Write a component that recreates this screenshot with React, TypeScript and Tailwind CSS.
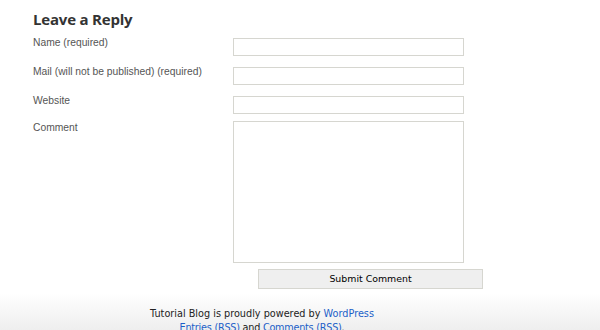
export default function App() {
  const fields = [
    "Name (required)",
    "Mail (will not be published) (required)",
    "Website",
  ];
  const labelFont = { fontFamily: '"Liberation Sans", Arial, sans-serif' };

  return (
    <div
      className="h-[330px] w-[600px] overflow-hidden bg-white"
      style={{ fontFamily: '"DejaVu Sans", "Noto Sans", sans-serif' }}
    >
      <div className="pl-[33px] pt-[9px]">
        <h3
          className="text-[15px] font-bold leading-[20px] tracking-[-0.2px] text-[#333]"
          style={{ fontFamily: '"Open Sans", "DejaVu Sans", sans-serif' }}
        >
          Leave a Reply
        </h3>
        <div className="mt-[9px] flex flex-col gap-[11px]">
          {fields.map((label) => (
            <div key={label} className="flex h-[18px]">
              <label
                className="-mt-[1px] w-[200px] text-[10.3px] leading-[12px] text-[#555]"
                style={labelFont}
              >
                {label}
              </label>
              <input
                type="text"
                className="h-[18px] w-[231px] border border-[#d6d6d0] bg-white outline-none"
              />
            </div>
          ))}
        </div>
        <div className="mt-[7px] flex">
          <label
            className="mt-[1px] w-[200px] text-[10.3px] leading-[12px] text-[#555]"
            style={labelFont}
          >
            Comment
          </label>
          <textarea className="block h-[142px] w-[231px] resize-none border border-[#d6d6d0] bg-white outline-none" />
        </div>
        <div className="mt-[6px] pl-[225px]">
          <button className="block h-[20px] w-[225px] border border-[#d6d6d0] bg-[#efefef] text-[9.4px] leading-[18px] text-black">
            Submit Comment
          </button>
        </div>
      </div>
      <div className="mt-[4px] h-[42px] w-[600px] bg-gradient-to-b from-white to-[#ececec]">
        <div className="w-[524px] pt-[14px] text-center text-[9.7px] leading-[14px] text-[#222]">
          <p>
            Tutorial Blog is proudly powered by{" "}
            <a className="text-[#1c5fc8]">WordPress</a>
          </p>
          <p className="tracking-[-0.25px]">
            <a className="text-[#1c5fc8]">Entries (RSS)</a> and{" "}
            <a className="text-[#1c5fc8]">Comments (RSS)</a>.
          </p>
        </div>
      </div>
    </div>
  );
}
